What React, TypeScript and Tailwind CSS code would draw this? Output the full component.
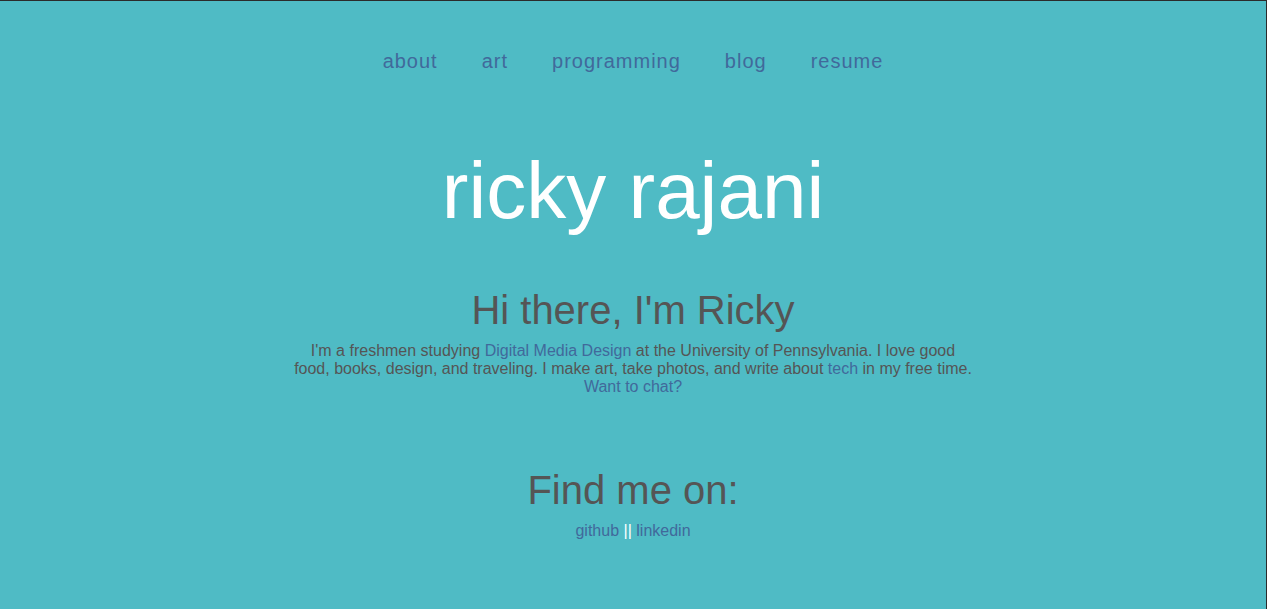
const navItems = ["about", "art", "programming", "blog", "resume"];

const App = () => {
  return (
    <div
      className="min-h-[609px] bg-[#4fbbc5] border-t border-r border-[#2b2b2b] text-center"
      style={{ fontFamily: '"Liberation Sans", Arial, sans-serif' }}
    >
      <nav className="pt-[49px] flex justify-center gap-[44px]">
        {navItems.map((item) => (
          <a
            key={item}
            href="#"
            className="text-[20px] leading-[23px] tracking-[1px] text-[#41699b]"
          >
            {item}
          </a>
        ))}
      </nav>

      <h1 className="mt-[72px] text-[80px] leading-[92px] text-white">ricky rajani</h1>

      <section className="mt-[50px]">
        <h2 className="text-[40px] leading-[46px] text-[#555555]">Hi there, I'm Ricky</h2>
        <p className="mt-[9px] mx-auto max-w-[720px] text-[16px] leading-[18px] text-[#555555]">
          I'm a freshmen studying{" "}
          <a href="#" className="text-[#41699b]">
            Digital Media Design
          </a>{" "}
          at the University of Pennsylvania. I love good
          <br />
          food, books, design, and traveling. I make art, take photos, and write about{" "}
          <a href="#" className="text-[#41699b]">
            tech
          </a>{" "}
          in my free time.
          <br />
          <a href="#" className="text-[#41699b]">
            Want to chat?
          </a>
        </p>
      </section>

      <section className="mt-[71px]">
        <h2 className="text-[40px] leading-[46px] text-[#555555]">Find me on:</h2>
        <p className="mt-[9px] text-[16px] leading-[18px] text-[#41699b]">
          <a href="#">github</a> <span className="text-white">||</span>{" "}
          <a href="#">linkedin</a>
        </p>
      </section>
    </div>
  );
};

export default App;
